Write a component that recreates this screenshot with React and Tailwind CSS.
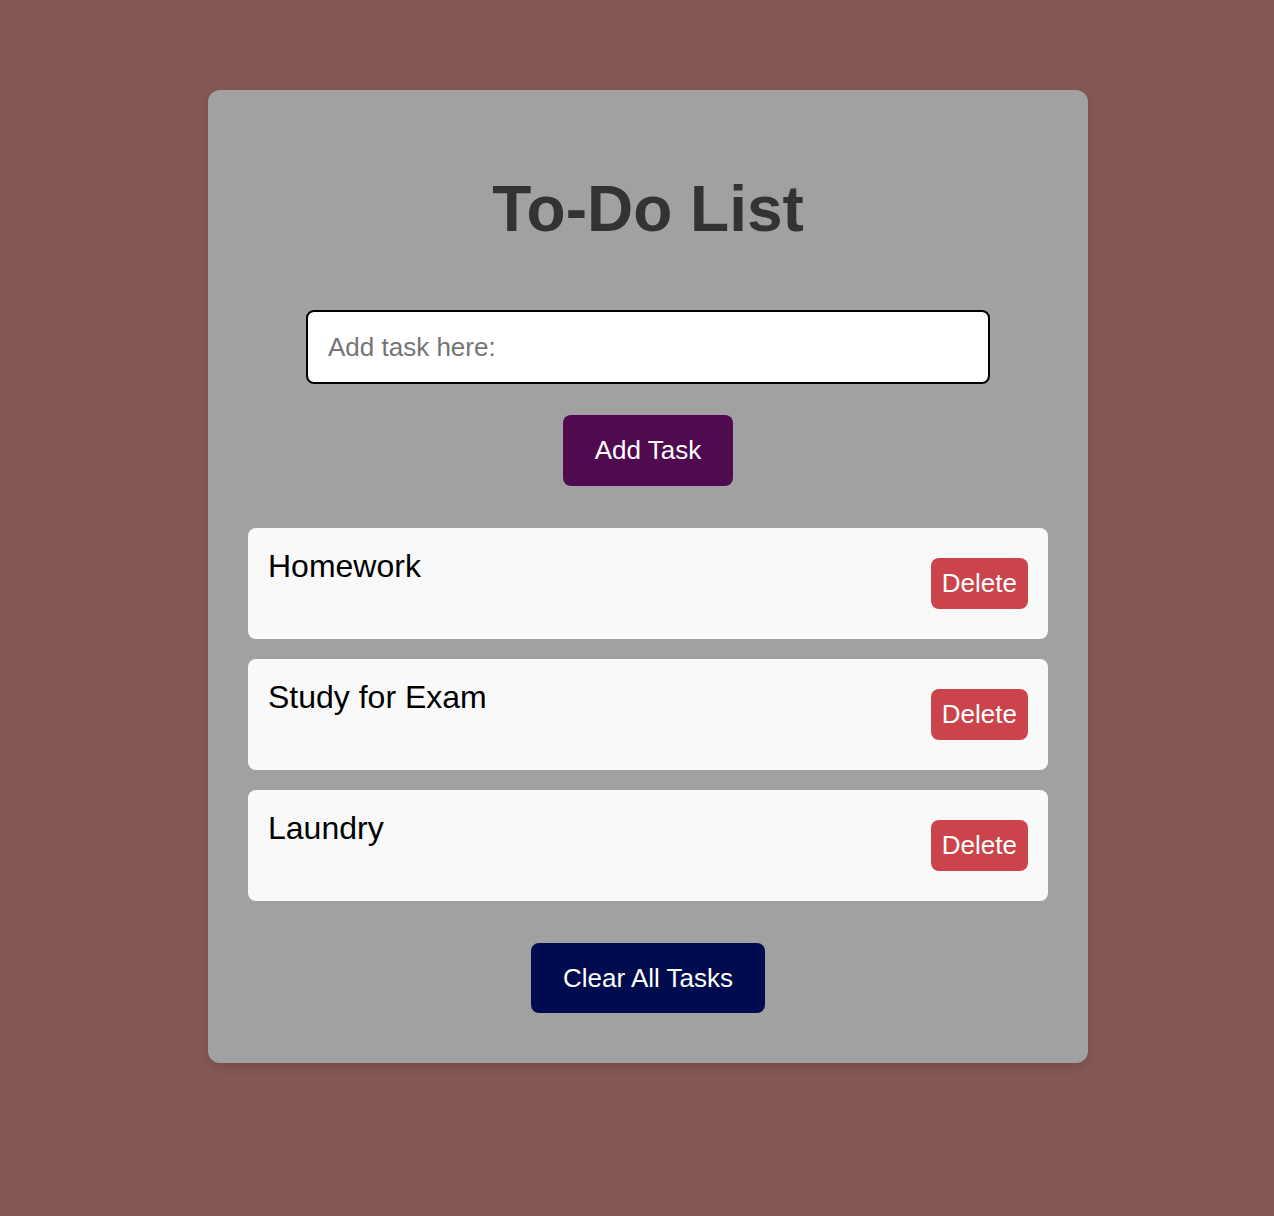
import React from "react";

const tasks = ["Homework", "Study for Exam", "Laundry"];

export default function App() {
  return (
    <div
      className="min-h-screen w-full bg-[#865855] pt-[90px] pb-[153px]"
      style={{ fontFamily: '"Liberation Sans", Arial, sans-serif' }}
    >
      <div className="ml-[208px] flex w-[880px] flex-col items-center rounded-xl bg-[#a1a1a1] px-10 pt-[87px] pb-[50px] shadow-[0_4px_12px_rgba(0,0,0,0.15)]">
        <h1 className="m-0 text-[64px] font-bold leading-none text-[#333333]">To-Do List</h1>
        <input
          type="text"
          placeholder="Add task here:"
          className="mt-[69px] h-[74px] w-[684px] rounded-lg border-2 border-black bg-white px-5 text-[26px] text-black outline-none placeholder:text-[#757575]"
        />
        <button className="mt-[31px] h-[71px] rounded-lg bg-[#500a50] px-[32px] text-[26px] text-white">
          Add Task
        </button>
        <div className="mt-[42px] flex w-full flex-col gap-5">
          {tasks.map((t) => (
            <div
              key={t}
              className="flex h-[111px] items-start justify-between rounded-lg bg-[#f9f9f9] p-5"
            >
              <span className="text-[32px] leading-[1.15] text-black">{t}</span>
              <button className="mt-[10px] h-[51px] rounded-lg bg-[#cc444b] px-[11px] text-[26px] text-white">
                Delete
              </button>
            </div>
          ))}
        </div>
        <button className="mt-[42px] h-[70px] rounded-lg bg-[#000c4d] px-[32px] text-[26px] text-white">
          Clear All Tasks
        </button>
      </div>
    </div>
  );
}
